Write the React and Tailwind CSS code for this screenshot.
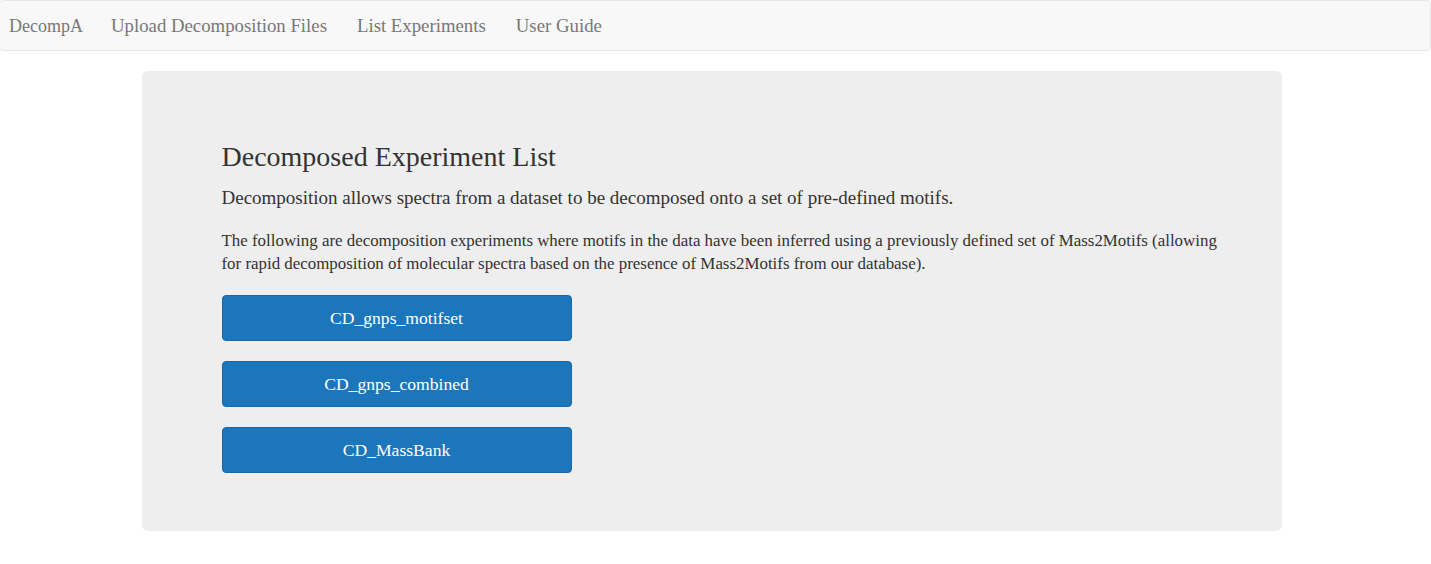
const buttons = ["CD_gnps_motifset", "CD_gnps_combined", "CD_MassBank"];

const App = () => {
	return (
		<div className="min-h-[564px] bg-white text-[#333]" style={{ fontFamily: "'Liberation Serif', serif" }}>
			<nav className="h-[51px] bg-[#f8f8f8] border border-[#e7e7e7] rounded-[4px] flex items-center -ml-px pt-px">
				<a className="pl-[9px] pr-[13px] text-[18px] text-[#777]">DecompA</a>
				<ul className="flex">
					{["Upload Decomposition Files", "List Experiments", "User Guide"].map((item) => (
						<li key={item} className="px-[15px] text-[18.8px] text-[#777]">{item}</li>
					))}
				</ul>
			</nav>
			<div className="pt-5 flex justify-center">
				<div className="w-[1140px] -ml-[8px] bg-[#eee] rounded-[6px] pl-[80px] pr-[60px] pt-[70px] pb-[58px]">
					<h1 className="text-[28px] leading-[32px] text-[#333]">Decomposed Experiment List</h1>
					<p className="mt-[12px] text-[19px] leading-[26px]">Decomposition allows spectra from a dataset to be decomposed onto a set of pre-defined motifs.</p>
					<p className="mt-[18px] text-[16.9px] leading-[23px] max-w-[1000px]">
						The following are decomposition experiments where motifs in the data have been inferred using a previously defined set of Mass2Motifs (allowing for rapid decomposition of molecular spectra based on the presence of Mass2Motifs from our database).
					</p>
					<div className="mt-[20px] flex flex-col gap-5">
						{buttons.map((name) => (
							<button key={name} className="w-[350px] h-[46px] bg-[#1c76bb] border border-[#1a6aa8] rounded-[4px] text-white text-[17.6px]">
								{name}
							</button>
						))}
					</div>
				</div>
			</div>
		</div>
	);
};

export default App;
